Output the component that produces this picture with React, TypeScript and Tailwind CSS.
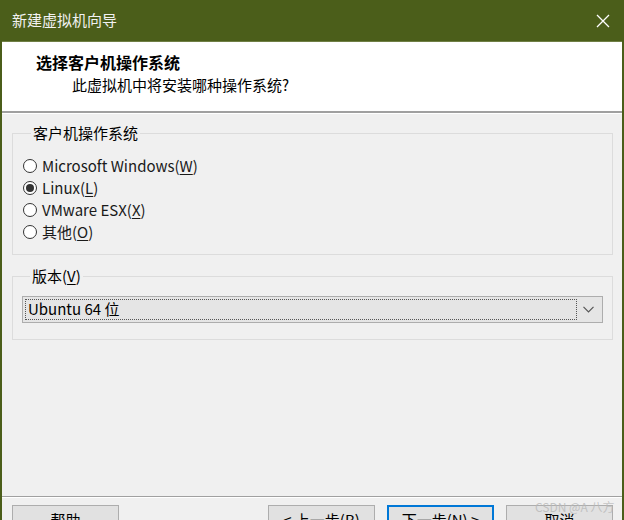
import React from "react";

const FONT = { fontFamily: '"Noto Sans CJK SC", "Noto Sans", sans-serif' };

function Radio({ checked, children }: { checked?: boolean; children: React.ReactNode }) {
  return (
    <div className="flex h-[22px] items-center">
      <span className="flex h-[14px] w-[14px] items-center justify-center rounded-full border border-[#333333] bg-white">
        {checked && <span className="h-[8px] w-[8px] rounded-full bg-[#333333]" />}
      </span>
      <span className="ml-[5px] text-[15px] leading-[20px] text-[#1a1a1a]">{children}</span>
    </div>
  );
}

function Btn({ children, primary }: { children: React.ReactNode; primary?: boolean }) {
  return (
    <div
      className={
        "flex h-[30px] w-[107px] items-center justify-center bg-[#e1e1e1] text-[15px] text-black " +
        (primary ? "border-2 border-[#0078d7]" : "border border-[#adadad]")
      }
    >
      {children}
    </div>
  );
}

export default function App() {
  return (
    <div className="relative h-[520px] w-[624px] overflow-hidden bg-[#f0f0f0]" style={FONT}>
      <div className="flex h-full flex-col border-x-2 border-[#4b5e1a]">
        {/* title bar */}
        <div className="flex h-[42px] shrink-0 items-center justify-between border-b border-[#6f7f45] bg-[#4b5e1a] pl-[10px] pr-[10px]">
          <span className="text-[15px] text-[#f2f2f2]">新建虚拟机向导</span>
          <svg width="14" height="14" viewBox="0 0 14 14" className="mr-[2px]">
            <path d="M1 1 L13 13 M13 1 L1 13" stroke="#ffffff" strokeWidth="1.3" />
          </svg>
        </div>
        {/* header */}
        <div className="h-[69px] shrink-0 bg-white pt-[9px]">
          <div className="pl-[34px] text-[16px] font-bold leading-[22px] text-black">选择客户机操作系统</div>
          <div className="pl-[70px] pt-[1px] text-[15px] leading-[22px] text-black">此虚拟机中将安装哪种操作系统?</div>
        </div>
        <div className="h-[2px] shrink-0 bg-[#a0a0a0]" />
        <div className="h-[1px] shrink-0 bg-white" />

        {/* body */}
        <div className="flex flex-1 flex-col">
          <fieldset className="ml-[10px] mr-[9px] mt-[9px] border border-[#dcdcdc] pb-[11px] pl-[10px]">
            <legend className="ml-[8px] px-[2px] text-[15px] leading-[20px] text-black">客户机操作系统</legend>
            <div className="pt-[12px]">
              <Radio>
                Microsoft Windows(<u className="underline-offset-2">W</u>)
              </Radio>
              <Radio checked>
                Linux(<u className="underline-offset-2">L</u>)
              </Radio>
              <Radio>
                VMware ESX(<u className="underline-offset-2">X</u>)
              </Radio>
              <Radio>
                其他(<u className="underline-offset-2">O</u>)
              </Radio>
            </div>
          </fieldset>

          <fieldset className="ml-[10px] mr-[9px] mt-[11px] border border-[#dcdcdc] pb-[16px] pl-[9px] pr-[9px]">
            <legend className="ml-[8px] px-[2px] text-[15px] leading-[20px] text-black">
              版本(<u className="underline-offset-2">V</u>)
            </legend>
            <div className="mt-[10px] flex h-[27px] items-center border border-[#adadad] bg-[#e5e5e5] pl-[2px] pr-[2px]">
              <div className="flex h-[21px] flex-1 items-center border border-dotted border-[#555555] pl-[2px] text-[15px] text-black">
                Ubuntu 64 位
              </div>
              <div className="flex w-[23px] items-center justify-center">
                <svg width="11" height="7" viewBox="0 0 11 7">
                  <path d="M0.5 0.8 L5.5 5.8 L10.5 0.8" fill="none" stroke="#555555" strokeWidth="1.2" />
                </svg>
              </div>
            </div>
          </fieldset>

          <div className="flex-1" />
          <div className="h-[1px] shrink-0 bg-[#a0a0a0]" />
          <div className="h-[1px] shrink-0 bg-white" />
          <div className="flex h-[22px] shrink-0 items-end pl-[10px] pr-[9px]">
            <div className="flex w-full translate-y-[15px] items-start">
              <Btn>帮助</Btn>
              <div className="flex-1" />
              <Btn>&lt; 上一步(<u>B</u>)</Btn>
              <div className="w-[12px]" />
              <Btn primary>下一步(<u>N</u>) &gt;</Btn>
              <div className="w-[12px]" />
              <Btn>取消</Btn>
            </div>
          </div>
        </div>
      </div>
      <div className="absolute left-[535px] top-[499px] whitespace-nowrap text-[12px] leading-[16px] text-[#b8b8b8]/80">
        CSDN @A 八方
      </div>
    </div>
  );
}
